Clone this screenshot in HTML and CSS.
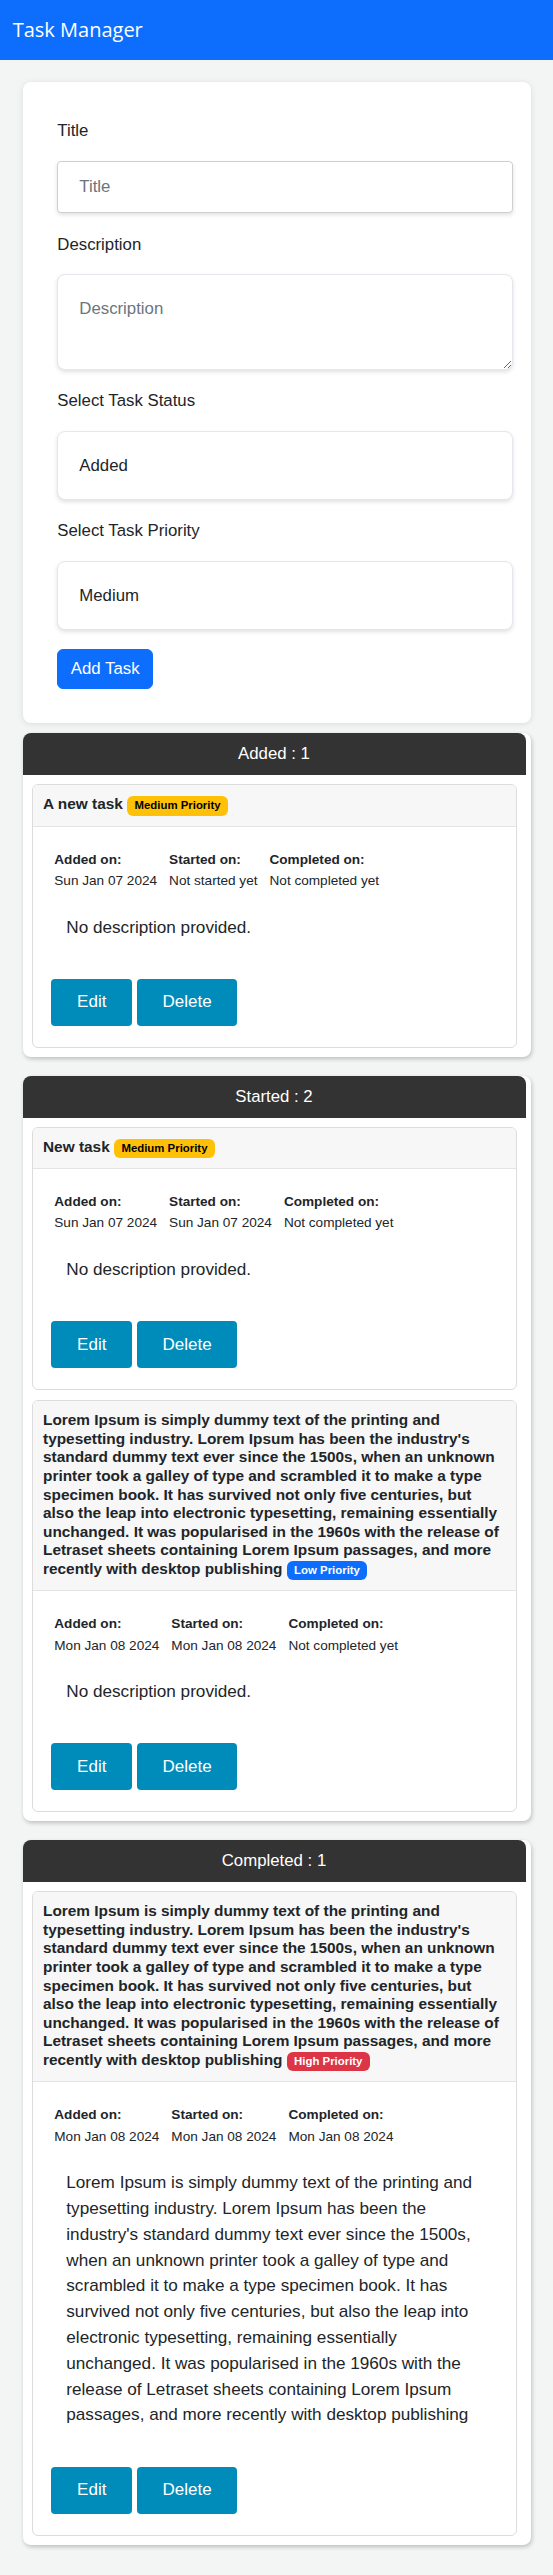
FILE: index.html
```html
<!DOCTYPE html>
<html lang="en">
<head>
<meta charset="utf-8">
<title>Task Manager</title>
<link rel="stylesheet" href="styles.css">
</head>
<body>
<nav class="navbar"><span class="brand">Task Manager</span></nav>
<main class="container">
  <form class="task-form">
    <label class="form-label" for="title">Title</label>
    <input class="form-input" id="title" type="text" placeholder="Title">
    <label class="form-label" for="desc">Description</label>
    <textarea class="form-textarea" id="desc" rows="2" placeholder="Description"></textarea>
    <label class="form-label" for="status">Select Task Status</label>
    <select class="form-select" id="status"><option>Added</option><option>Started</option><option>Completed</option></select>
    <label class="form-label" for="priority">Select Task Priority</label>
    <select class="form-select" id="priority"><option>Medium</option><option>Low</option><option>High</option></select>
    <button class="btn-primary" type="button">Add Task</button>
  </form>

  <section class="column">
    <div class="column-header">Added : 1</div>
    <div class="column-body">
      <article class="task-card">
        <div class="task-header"><h5 class="task-title">A new task <span class="badge badge-medium">Medium Priority</span></h5></div>
        <div class="task-body">
          <div class="dates">
            <div class="date-col"><div class="date-label">Added on:</div><div>Sun Jan 07 2024</div></div>
            <div class="date-col"><div class="date-label">Started on:</div><div>Not started yet</div></div>
            <div class="date-col"><div class="date-label">Completed on:</div><div>Not completed yet</div></div>
          </div>
          <p class="task-desc">No description provided.</p>
          <div class="actions"><button class="btn-action" type="button">Edit</button><button class="btn-action" type="button">Delete</button></div>
        </div>
      </article>
    </div>
  </section>

  <section class="column">
    <div class="column-header">Started : 2</div>
    <div class="column-body">
      <article class="task-card">
        <div class="task-header"><h5 class="task-title">New task <span class="badge badge-medium">Medium Priority</span></h5></div>
        <div class="task-body">
          <div class="dates">
            <div class="date-col"><div class="date-label">Added on:</div><div>Sun Jan 07 2024</div></div>
            <div class="date-col"><div class="date-label">Started on:</div><div>Sun Jan 07 2024</div></div>
            <div class="date-col"><div class="date-label">Completed on:</div><div>Not completed yet</div></div>
          </div>
          <p class="task-desc">No description provided.</p>
          <div class="actions"><button class="btn-action" type="button">Edit</button><button class="btn-action" type="button">Delete</button></div>
        </div>
      </article>
      <article class="task-card">
        <div class="task-header"><h5 class="task-title">Lorem Ipsum is simply dummy text of the printing and typesetting industry. Lorem Ipsum has been the industry's standard dummy text ever since the 1500s, when an unknown printer took a galley of type and scrambled it to make a type specimen book. It has survived not only five centuries, but also the leap into electronic typesetting, remaining essentially unchanged. It was popularised in the 1960s with the release of Letraset sheets containing Lorem Ipsum passages, and more recently with desktop publishing <span class="badge badge-low">Low Priority</span></h5></div>
        <div class="task-body">
          <div class="dates">
            <div class="date-col"><div class="date-label">Added on:</div><div>Mon Jan 08 2024</div></div>
            <div class="date-col"><div class="date-label">Started on:</div><div>Mon Jan 08 2024</div></div>
            <div class="date-col"><div class="date-label">Completed on:</div><div>Not completed yet</div></div>
          </div>
          <p class="task-desc">No description provided.</p>
          <div class="actions"><button class="btn-action" type="button">Edit</button><button class="btn-action" type="button">Delete</button></div>
        </div>
      </article>
    </div>
  </section>

  <section class="column">
    <div class="column-header">Completed : 1</div>
    <div class="column-body">
      <article class="task-card">
        <div class="task-header"><h5 class="task-title">Lorem Ipsum is simply dummy text of the printing and typesetting industry. Lorem Ipsum has been the industry's standard dummy text ever since the 1500s, when an unknown printer took a galley of type and scrambled it to make a type specimen book. It has survived not only five centuries, but also the leap into electronic typesetting, remaining essentially unchanged. It was popularised in the 1960s with the release of Letraset sheets containing Lorem Ipsum passages, and more recently with desktop publishing <span class="badge badge-high">High Priority</span></h5></div>
        <div class="task-body">
          <div class="dates">
            <div class="date-col"><div class="date-label">Added on:</div><div>Mon Jan 08 2024</div></div>
            <div class="date-col"><div class="date-label">Started on:</div><div>Mon Jan 08 2024</div></div>
            <div class="date-col"><div class="date-label">Completed on:</div><div>Mon Jan 08 2024</div></div>
          </div>
          <p class="task-desc">Lorem Ipsum is simply dummy text of the printing and typesetting industry. Lorem Ipsum has been the industry's standard dummy text ever since the 1500s, when an unknown printer took a galley of type and scrambled it to make a type specimen book. It has survived not only five centuries, but also the leap into electronic typesetting, remaining essentially unchanged. It was popularised in the 1960s with the release of Letraset sheets containing Lorem Ipsum passages, and more recently with desktop publishing</p>
          <div class="actions"><button class="btn-action" type="button">Edit</button><button class="btn-action" type="button">Delete</button></div>
        </div>
      </article>
    </div>
  </section>
</main>
</body>
</html>
```

FILE: styles.css
```css
* {
  box-sizing: border-box;
}

body {
  margin: 0;
  background: #f3f5f4;
  font-family: "Liberation Sans", Arial, sans-serif;
  color: #212529;
}

.navbar {
  height: 60px;
  background: #0d6efd;
  display: flex;
  align-items: center;
  padding-left: 12.7px;
}

.brand {
  font-family: "Open Sans", "Noto Sans", sans-serif;
  font-size: 20px;
  line-height: 30px;
  color: #fff;
}

.container {
  padding: 22.3px 22px 30px 22.5px;
}

.task-form {
  background: #fff;
  border-radius: 8px;
  box-shadow: 0 1px 6px rgba(0, 0, 0, 0.1);
  padding: 36px 17.8px 33.8px 34.8px;
  margin: 0 0 10.6px;
  display: flex;
  flex-direction: column;
  align-items: flex-start;
}

.form-label {
  font-size: 16.8px;
  line-height: 25.2px;
  margin-bottom: 17.3px;
}

.form-input,
.form-textarea,
.form-select {
  width: 100%;
  font-family: "Liberation Sans", Arial, sans-serif;
  font-size: 16.8px;
  line-height: 25.2px;
  color: #212529;
  background: #fff;
  margin: 0 0 18.3px;
  box-shadow: 0 2px 4px rgba(0, 0, 0, 0.12);
  outline: none;
}

.form-input {
  height: 52.7px;
  padding: 0 21px;
  border: 1px solid #cfcfcf;
  border-radius: 4px;
}

.form-textarea {
  height: 95.7px;
  padding: 21px;
  border: 1px solid #e6e6ec;
  border-radius: 8px;
}

.form-input::placeholder,
.form-textarea::placeholder {
  color: #6c757d;
}

.form-select {
  -webkit-appearance: none;
  appearance: none;
  height: 69.4px;
  padding: 0 21px;
  border: 1px solid #e6e6ee;
  border-radius: 8px;
}

.btn-primary {
  font-family: "Liberation Sans", Arial, sans-serif;
  font-size: 16.8px;
  line-height: 25.2px;
  padding: 6.6px 12.5px;
  border: 1px solid #0d6efd;
  border-radius: 6px;
  background: #0d6efd;
  color: #fff;
}

.column {
  background: #fff;
  border-radius: 8px;
  box-shadow: 1px 2px 4px rgba(0, 0, 0, 0.22);
  padding-right: 5.5px;
  margin-bottom: 19px;
}

.column:last-child {
  margin-bottom: 0;
}

.column-header {
  height: 42px;
  background: #333;
  color: #fff;
  border-radius: 8px 8px 0 0;
  display: flex;
  align-items: center;
  justify-content: center;
  font-size: 16.8px;
}

.column-body {
  padding: 9px;
  display: flex;
  flex-direction: column;
  gap: 10px;
}

.task-card {
  border: 1px solid #dcdcdc;
  border-radius: 6px;
  background: #fff;
  overflow: hidden;
}

.task-header {
  background: #f7f7f7;
  border-bottom: 1px solid #e4e4e4;
  padding: 10px 10.5px;
}

.task-title {
  margin: 0;
  font-size: 15.4px;
  line-height: 18.6px;
  font-weight: 700;
}

.badge {
  display: inline-block;
  font-size: 11.4px;
  font-weight: 700;
  line-height: 1;
  padding: 4px 7.4px;
  border-radius: 6px;
  vertical-align: baseline;
}

.badge-medium {
  background: #ffc107;
  color: #000;
}

.badge-low {
  background: #0d6efd;
  color: #fff;
}

.badge-high {
  background: #dc3545;
  color: #fff;
}

.task-body {
  padding: 21.9px 18.8px 21px;
}

.dates {
  display: flex;
  gap: 12px;
  margin-left: 3px;
  font-size: 13.6px;
  line-height: 21.3px;
}

.date-label {
  font-weight: 700;
}

.task-desc {
  margin: 23.3px 15px 38.4px;
  font-size: 17.15px;
  line-height: 25.8px;
}

.actions {
  display: flex;
  gap: 4.5px;
}

.btn-action {
  background: #008cba;
  color: #fff;
  border: none;
  border-radius: 4px;
  height: 47px;
  padding: 0 25.8px;
  font-family: "Liberation Sans", Arial, sans-serif;
  font-size: 17px;
}
```
